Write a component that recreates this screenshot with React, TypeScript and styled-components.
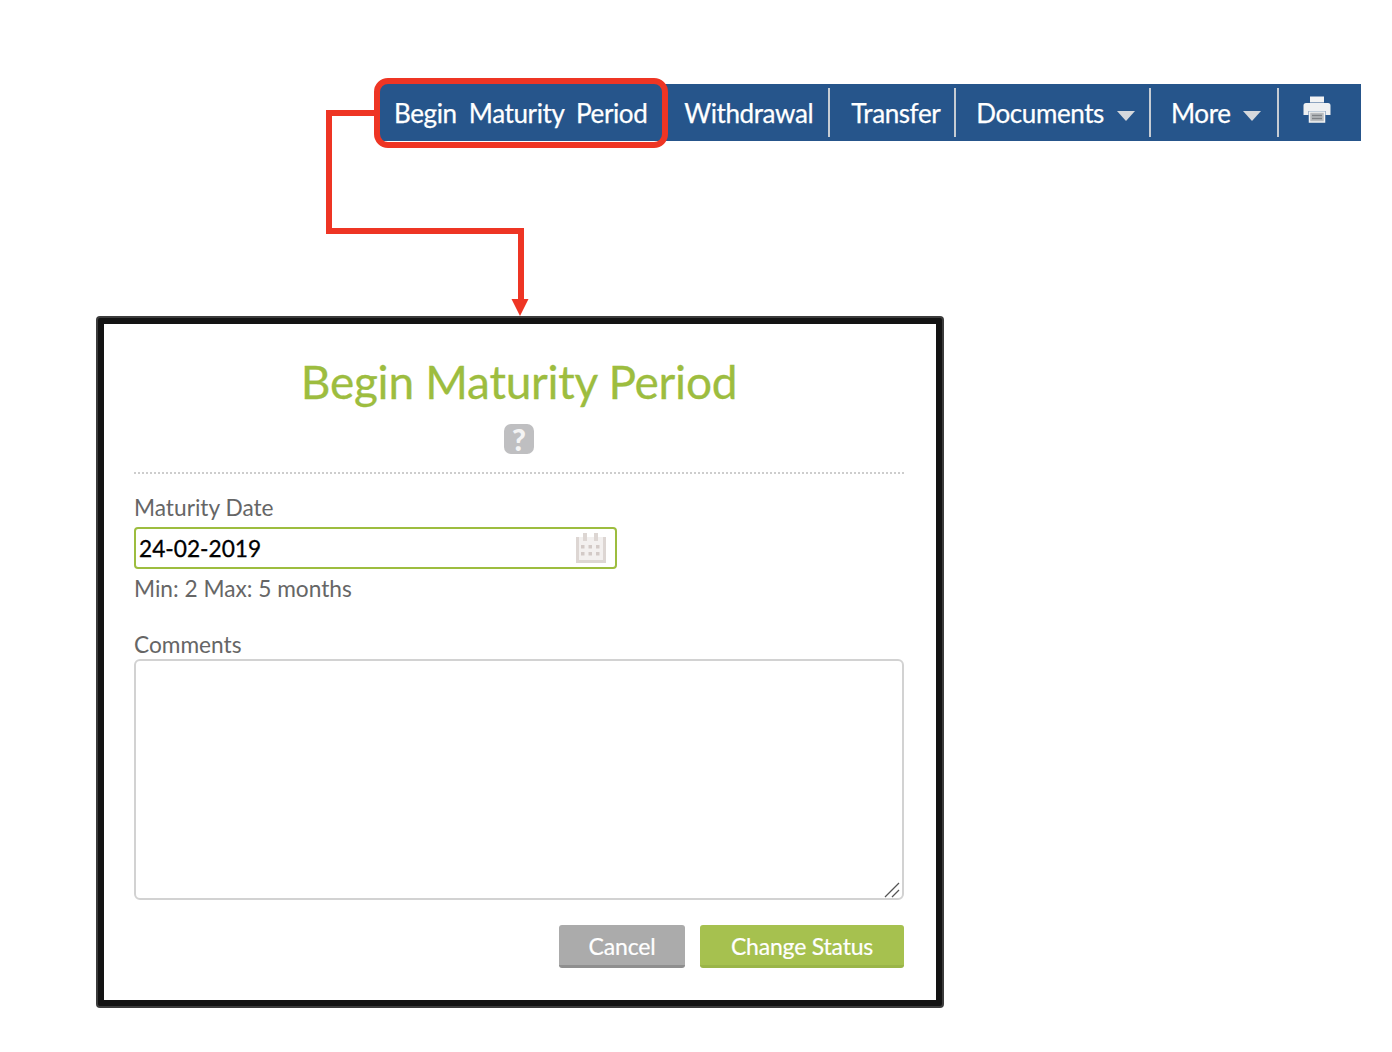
import React from "react";
import styled, { createGlobalStyle } from "styled-components";

const Global = createGlobalStyle`
  html, body { margin: 0; padding: 0; background: #fff; }
  body { font-family: Lato, "Open Sans", sans-serif; }
`;

const Page = styled.div`
  position: relative;
  width: 1392px;
  height: 1052px;
  padding-top: 84px;
  box-sizing: border-box;
  overflow: hidden;
`;

const Toolbar = styled.nav`
  display: flex;
  align-items: stretch;
  width: 981px;
  height: 57px;
  margin-left: 380px;
  background: #26558b;
  box-sizing: border-box;
`;

const Item = styled.div<{ $left: number; $right: number; $divider?: boolean }>`
  display: flex;
  align-items: center;
  height: 49px;
  margin-top: 4px;
  padding: 0 ${(p) => p.$right}px 0 ${(p) => p.$left}px;
  color: #fff;
  font-size: 26px;
  letter-spacing: -0.4px;
  -webkit-text-stroke: 0.25px #fff;
  white-space: nowrap;
  box-sizing: border-box;
  border-right: ${(p) => (p.$divider ? "2px solid #c6ccd3" : "none")};
`;

const BeginLabel = styled.span`
  word-spacing: 6px;
`;

const Caret = styled.span<{ $gap: number }>`
  width: 0;
  height: 0;
  margin: 6px 0 0 ${(p) => p.$gap}px;
  border-left: 9.5px solid transparent;
  border-right: 9.5px solid transparent;
  border-top: 10px solid #d5d8dc;
`;

const PrinterIcon = styled.svg`
  display: block;
  margin-top: -8px;
`;

const Overlay = styled.svg`
  position: absolute;
  left: 0;
  top: 0;
  pointer-events: none;
`;

const Modal = styled.section`
  width: 844px;
  height: 688px;
  margin: 177px 0 0 98px;
  padding: 30px 32px 0 30px;
  box-sizing: border-box;
  background: #fff;
  border: 6px solid #131313;
  box-shadow: 0 0 0 2px #3c3c3c;
  border-radius: 2px;
  display: flex;
  flex-direction: column;
`;

const Title = styled.h1`
  margin: 0;
  height: 58px;
  line-height: 56px;
  text-align: center;
  font-size: 46px;
  font-weight: 400;
  letter-spacing: -0.25px;
  -webkit-text-stroke: 0.3px #9dbd3f;
  color: #9dbd3f;
`;

const HelpBadge = styled.div`
  align-self: center;
  width: 30px;
  height: 30px;
  margin: 12px 0 0 0;
  border-radius: 7px;
  background: #bfbfc1;
  color: #f4f4f4;
  font-size: 30px;
  font-weight: 900;
  line-height: 30px;
  text-align: center;
`;

const Rule = styled.hr`
  width: 100%;
  height: 2px;
  box-sizing: border-box;
  margin: 18px 0 0;
  border: 0;
  border-top: 2px dotted #cdcdcd;
`;

const Label = styled.label`
  display: block;
  color: #666;
  font-size: 22.7px;
  line-height: 30px;
`;

const DateLabel = styled(Label)`
  margin-top: 19px;
`;

const CommentsLabel = styled(Label)`
  margin-top: 26px;
  height: 28px;
`;

const DateField = styled.div`
  position: relative;
  width: 483px;
  height: 42px;
  margin-top: 4px;
`;

const DateInput = styled.input`
  width: 100%;
  height: 100%;
  box-sizing: border-box;
  padding: 1px 3px 0;
  border: 2px solid #9dbd3f;
  border-radius: 4px;
  background: #fff;
  color: #000;
  font-family: inherit;
  font-size: 22.7px;
  -webkit-text-stroke: 0.3px #000;
  outline: none;
`;

const CalendarIcon = styled.svg`
  position: absolute;
  right: 11px;
  top: 6px;
`;

const Hint = styled.div`
  color: #666;
  font-size: 22.7px;
  line-height: 30px;
  margin-top: 5px;
`;

const CommentsWrap = styled.div`
  position: relative;
  width: 100%;
  height: 241px;
  margin-top: 1px;
`;

const Comments = styled.textarea`
  display: block;
  width: 100%;
  height: 100%;
  box-sizing: border-box;
  border: 2px solid #d2d2d2;
  border-radius: 6px;
  background: #fff;
  outline: none;
  margin: 0;
  resize: none;
`;

const ResizeGrip = styled.svg`
  position: absolute;
  right: 2px;
  bottom: 2px;
  pointer-events: none;
`;

const Actions = styled.div`
  display: flex;
  justify-content: flex-end;
  gap: 15px;
  margin-top: 25px;
`;

const Button = styled.button<{ $bg: string; $edge: string; $width: number }>`
  width: ${(p) => p.$width}px;
  height: 43px;
  padding: 2px 0 0;
  border: 0;
  border-bottom: 3px solid ${(p) => p.$edge};
  border-radius: 3px;
  background: ${(p) => p.$bg};
  color: #fff;
  font-family: inherit;
  font-size: 23px;
  letter-spacing: -0.2px;
  -webkit-text-stroke: 0.2px #fff;
`;

export default function App() {
  return (
    <>
      <Global />
      <Page>
        <Toolbar>
          <Item $left={14} $right={37}>
            <BeginLabel>Begin Maturity Period</BeginLabel>
          </Item>
          <Item $left={0} $right={15} $divider>Withdrawal</Item>
          <Item $left={21} $right={14} $divider>Transfer</Item>
          <Item $left={20} $right={14} $divider>
            Documents<Caret $gap={13} />
          </Item>
          <Item $left={20} $right={16} $divider>
            More<Caret $gap={12} />
          </Item>
          <Item $left={24} $right={0}>
            <PrinterIcon width="28" height="28" viewBox="0 0 28 28">
              <path d="M7 1.5h14v6H7z" fill="#f2f3f4" />
              <path d="M3 8h22a2.5 2.5 0 0 1 2.500 2.500V20h-5v-4H5.500v4h-5v-9.500A2.500 2.500 0 0 1 3 8z" fill="#eef0f2" />
              <path d="M6.500 17h15v10h-15z" fill="#b9bcbf" stroke="#f2f3f4" strokeWidth="1.500" />
              <path d="M9 20.500h10M9 23.500h10" stroke="#7f8387" strokeWidth="1.500" />
            </PrinterIcon>
          </Item>
        </Toolbar>

        <Modal>
          <Title>Begin Maturity Period</Title>
          <HelpBadge>?</HelpBadge>
          <Rule />
          <DateLabel>Maturity Date</DateLabel>
          <DateField>
            <DateInput readOnly value="24-02-2019" />
            <CalendarIcon width="30" height="30" viewBox="0 0 30 30">
              <path d="M0 4h30v26H0z" fill="#f3f0ef" />
              <path d="M0 4h3v23h24V4h3v26H0z" fill="#ddd6d3" />
              <path d="M7 0h4v8H7zM18 0h4v8h-4z" fill="#ddd6d3" />
              <path d="M5 12h3.500v3.500H5zM12.500 12h3.500v3.500h-3.500zM20 12h3.500v3.500H20zM5 19h3.500v3.500H5zM12.500 19h3.500v3.500h-3.500zM20 19h3.500v3.500H20z" fill="#d3cac7" />
            </CalendarIcon>
          </DateField>
          <Hint>Min: 2 Max: 5 months</Hint>
          <CommentsLabel>Comments</CommentsLabel>
          <CommentsWrap>
            <Comments />
            <ResizeGrip width="18" height="18" viewBox="0 0 18 18">
              <path d="M1 17L15 3M8 17l7-7" stroke="#555" strokeWidth="1.300" fill="none" />
            </ResizeGrip>
          </CommentsWrap>
          <Actions>
            <Button $bg="#ababab" $edge="#8f8f8f" $width={126}>Cancel</Button>
            <Button $bg="#a6c14f" $edge="#9ab548" $width={204}>Change Status</Button>
          </Actions>
        </Modal>

        <Overlay width="1392" height="1052" viewBox="0 0 1392 1052">
          <rect x="377" y="81" width="288" height="64" rx="11" fill="none" stroke="#ee3524" strokeWidth="6" />
          <path d="M378 113H329V231H521V300" fill="none" stroke="#ee3524" strokeWidth="6" />
          <path d="M511.500 299h17L520 316z" fill="#ee3524" />
        </Overlay>
      </Page>
    </>
  );
}
